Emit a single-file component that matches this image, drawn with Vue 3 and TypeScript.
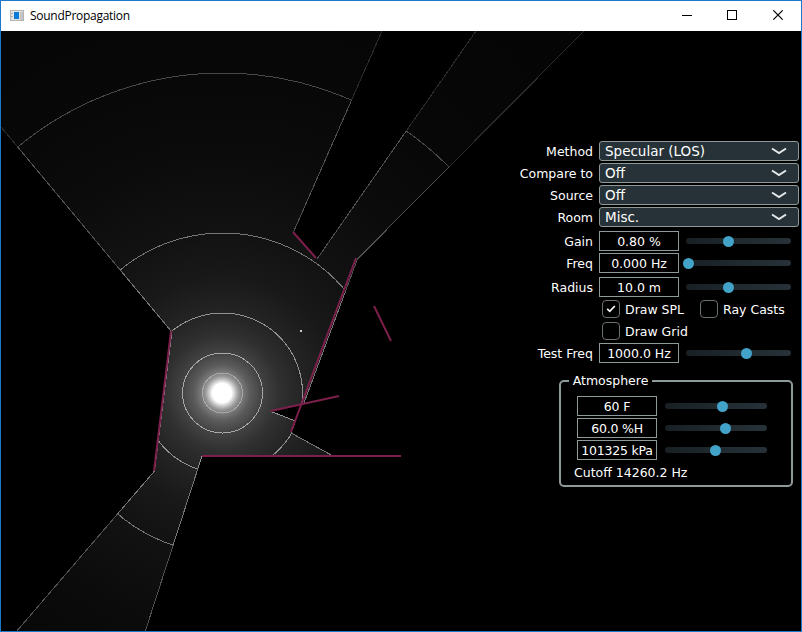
<script setup lang="ts">
interface SelectRow { label: string; value: string }
interface SliderRow { label: string; value: string; pos: number; gap: number }

const selects: SelectRow[] = [
  { label: 'Method', value: 'Specular (LOS)' },
  { label: 'Compare to', value: 'Off' },
  { label: 'Source', value: 'Off' },
  { label: 'Room', value: 'Misc.' },
]
const sliders: SliderRow[] = [
  { label: 'Gain', value: '0.80 %', pos: 42.5, gap: 4 },
  { label: 'Freq', value: '0.000 Hz', pos: 2.5, gap: 2 },
  { label: 'Radius', value: '10.0 m', pos: 42.5, gap: 4 },
]
const atmosphere: SliderRow[] = [
  { label: 'Temperature', value: '60 F', pos: 57.5, gap: 2 },
  { label: 'Humidity', value: '60.0 %H', pos: 60.5, gap: 2 },
  { label: 'Pressure', value: '101325 kPa', pos: 50.5, gap: 2 },
]
const rings = [
  { r: 20, c: '#a8a8a8' },
  { r: 40, c: '#a8a8a8' },
  { r: 80, c: '#929292' },
  { r: 160, c: '#757575' },
  { r: 320, c: '#484848' },
]
const walls = [
  [171, 331, 154, 471],
  [293, 232, 316, 258],
  [356, 258, 291, 432],
  [271, 411, 339, 396],
  [374, 306, 391, 341],
  [202, 456, 401, 456],
]
const litArea = 'M171 331L1 127V31H382L293.5 232L317 259L476 31H584L357 259L303.5 404L271 411.5L295.5 421L291 432L334 456.5H202L145 632H16L154.500 471Z'
</script>

<template>
  <div class="window">
    <header class="titlebar">
      <svg class="app-icon" width="14" height="11" viewBox="0 0 14 11" shape-rendering="crispEdges">
        <rect width="14" height="11" fill="#b4b4b4" />
        <rect x="1" y="1" width="12" height="9" fill="#e4e4e4" />
        <rect x="10" y="2" width="3" height="8" fill="#c4c4c4" />
        <rect x="1" y="3" width="2" height="1" fill="#aaa" />
        <rect x="1" y="6" width="2" height="1" fill="#aaa" />
        <rect x="4" y="2" width="5" height="7" fill="#0b7ad8" />
      </svg>
      <span class="title">SoundPropagation</span>
      <svg class="controls" width="102" height="10" viewBox="0 0 102 10" fill="none" stroke="#000">
        <path d="M0 5.500H10M45.500 .5H54.500V9.500H45.500Z" shape-rendering="crispEdges" />
        <path d="M91.300 .3L100.700 9.700M100.700 .3L91.300 9.700" stroke-width="1.100" />
      </svg>
    </header>

    <main class="view">
      <svg class="scene" width="800" height="600" viewBox="1 31 800 600">
        <defs>
          <radialGradient id="light" gradientUnits="userSpaceOnUse" cx="222" cy="393" r="480">
            <stop offset="0" stop-color="#fff" />
            <stop offset=".02" stop-color="#fff" />
            <stop offset=".027" stop-color="#ccc" />
            <stop offset=".034" stop-color="#9c9c9c" />
            <stop offset=".042" stop-color="#7c7c7c" />
            <stop offset=".058" stop-color="#5c5c5c" />
            <stop offset=".083" stop-color="#434343" />
            <stop offset=".12" stop-color="#303030" />
            <stop offset=".167" stop-color="#242424" />
            <stop offset=".24" stop-color="#191919" />
            <stop offset=".333" stop-color="#121212" />
            <stop offset=".5" stop-color="#0b0b0b" />
            <stop offset=".7" stop-color="#070707" />
            <stop offset="1" stop-color="#050505" />
          </radialGradient>
          <radialGradient id="edge" gradientUnits="userSpaceOnUse" cx="222" cy="393" r="480">
            <stop offset="0" stop-color="#929292" />
            <stop offset=".167" stop-color="#929292" />
            <stop offset=".167" stop-color="#747474" />
            <stop offset=".333" stop-color="#747474" />
            <stop offset=".333" stop-color="#505050" />
            <stop offset=".667" stop-color="#505050" />
            <stop offset=".667" stop-color="#2c2c2c" />
            <stop offset="1" stop-color="#2c2c2c" />
          </radialGradient>
          <clipPath id="lit"><path :d="litArea" /></clipPath>
        </defs>
        <path :d="litArea" fill="url(#light)" />
        <g clip-path="url(#lit)" fill="none" shape-rendering="crispEdges">
          <circle v-for="g in rings" :key="g.r" cx="222.500" cy="393" :r="g.r" :stroke="g.c" />
        </g>
        <path
          d="M171 331L1 127M382 31L293.500 232M317 259L476 31M584 31L357.500 259L304 403M271 411.500L295.500 421L291 433L334 456.500M202 456L145 632M16 632L154.500 471L172 331"
          fill="none" stroke="url(#edge)" shape-rendering="crispEdges"
        />
        <line
          v-for="(w, i) in walls" :key="i"
          :x1="w[0]" :y1="w[1]" :x2="w[2]" :y2="w[3]" stroke="#7d1f4b" stroke-width="2"
        />
        <rect x="300" y="330" width="2" height="2" fill="#ccc" />
      </svg>

      <section class="panel">
        <div v-for="s in selects" :key="s.label" class="row">
          <span class="label">{{ s.label }}</span>
          <div class="select">
            <span>{{ s.value }}</span>
            <svg width="16" height="8" viewBox="0 0 16 8"><path d="M1 1.500L8 6L15 1.500" fill="none" stroke="#e4e7e8" stroke-width="2" /></svg>
          </div>
        </div>
        <div v-for="s in sliders" :key="s.label" class="row" :style="{ marginTop: s.gap + 'px' }">
          <span class="label">{{ s.label }}</span>
          <span class="field">{{ s.value }}</span>
          <div class="slider"><i class="thumb" :style="{ left: s.pos + 'px' }" /></div>
        </div>
        <div class="checks">
          <span class="check">
            <i class="box"><svg width="10" height="8" viewBox="0 0 10 8"><path d="M1.200 3.800L3.800 6.300L8.800 1" fill="none" stroke="#fff" stroke-width="1.700" /></svg></i><span>Draw SPL</span>
          </span>
          <span class="check"><i class="box" /><span>Ray Casts</span></span>
          <span class="check"><i class="box" /><span>Draw Grid</span></span>
        </div>
        <div class="row">
          <span class="label">Test Freq</span>
          <span class="field">1000.0 Hz</span>
          <div class="slider"><i class="thumb" :style="{ left: '60.5px' }" /></div>
        </div>

        <div class="group">
          <span class="legend">Atmosphere</span>
          <div v-for="a in atmosphere" :key="a.label" class="atm-row">
            <span class="field">{{ a.value }}</span>
            <div class="slider short"><i class="thumb" :style="{ left: a.pos + 'px' }" /></div>
          </div>
          <div class="cutoff">Cutoff 14260.2 Hz</div>
        </div>
      </section>
    </main>
  </div>
</template>

<style>
body { margin: 0; background: #000; overflow: hidden; }
</style>

<style scoped>
.window {
  box-sizing: border-box;
  width: 802px;
  height: 632px;
  border: 1px solid #1979ca;
  background: #000;
  display: flex;
  flex-direction: column;
}
.titlebar {
  height: 30px;
  flex: none;
  background: #fff;
  display: flex;
  align-items: center;
  padding: 0 17px 0 9px;
  color: #000;
  font: 12px/16px "Open Sans", "Noto Sans", sans-serif;
}
.app-icon { margin-top: -2px; }
.title { margin-left: 6px; letter-spacing: -0.28px; }
.controls { margin-left: auto; margin-top: -2px; width: 102px; }
.view {
  position: relative;
  flex: 1;
  display: flex;
  justify-content: flex-end;
  overflow: hidden;
}
.scene { position: absolute; left: 0; top: 0; }
.panel {
  position: relative;
  width: 290px;
  padding-top: 110px;
  color: #fff;
  font: 12.5px/18px "DejaVu Sans", Verdana, sans-serif;
  white-space: nowrap;
}
.row { display: flex; align-items: center; height: 20px; margin-bottom: 2px; }
.row:nth-child(n+5) { margin-bottom: 0; }
.label { width: 82px; margin-right: 6px; padding-top: 2px; text-align: right; flex: none; }
.select {
  box-sizing: border-box;
  width: 200px;
  height: 20px;
  border: 1px solid #8e9a9a;
  border-radius: 3px;
  background: #263238;
  display: flex;
  align-items: center;
  justify-content: space-between;
  padding: 0 11px 0 5px;
  font-size: 13.5px;
}
.field {
  box-sizing: border-box;
  width: 80px;
  height: 20px;
  flex: none;
  border: 1px solid #8e9a9a;
  text-align: center;
  line-height: 20px;
}
.slider {
  position: relative;
  width: 105px;
  height: 6px;
  margin-left: 7px;
  border-radius: 3px;
  background: linear-gradient(90deg, #182024, #263238);
}
.slider.short { width: 102px; margin-left: 8px; }
.thumb {
  position: absolute;
  top: -2.5px;
  width: 11px;
  height: 11px;
  margin-left: -5.5px;
  border-radius: 50%;
  background: #42a2c8;
}
.checks {
  display: grid;
  grid-template-columns: 98px auto;
  grid-auto-rows: 22px;
  margin: 1px 0 1px 91px;
}
.check { display: flex; align-items: center; gap: 5px; }
.check span { padding-top: 2px; }
.box {
  box-sizing: border-box;
  width: 18px;
  height: 18px;
  border: 1px solid #687070;
  border-radius: 4px;
  display: flex;
  align-items: center;
  justify-content: center;
}
.group {
  position: relative;
  box-sizing: border-box;
  width: 234px;
  height: 107px;
  margin: 17px 0 0 48px;
  border: 2px solid #8e9a9a;
  border-radius: 5px;
  padding: 14px 0 0 16px;
}
.legend {
  position: absolute;
  left: 8px;
  top: -10px;
  width: 83px;
  text-align: center;
  background: #000;
}
.atm-row { display: flex; align-items: center; height: 20px; margin-bottom: 2px; }
.atm-row .field { letter-spacing: -0.2px; }
.cutoff { margin: 4px 0 0 -3px; }
</style>
